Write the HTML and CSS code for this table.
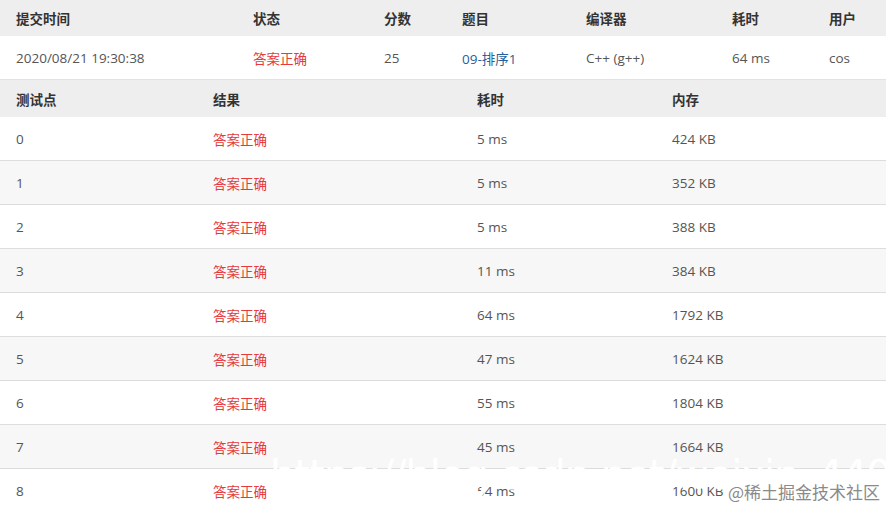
FILE: index.html
```html
<!DOCTYPE html>
<html lang="zh-CN">
<head>
<meta charset="utf-8">
<link rel="stylesheet" href="styles.css">
</head>
<body>
<div class="page">
  <table class="tbl summary">
    <colgroup>
      <col class="c1"><col class="c2"><col class="c3"><col class="c4"><col class="c5"><col class="c6"><col class="c7">
    </colgroup>
    <thead>
      <tr><th>提交时间</th><th>状态</th><th>分数</th><th>题目</th><th>编译器</th><th>耗时</th><th>用户</th></tr>
    </thead>
    <tbody>
      <tr><td>2020/08/21 19:30:38</td><td class="ok">答案正确</td><td>25</td><td class="link">09-排序1</td><td>C++ (g++)</td><td>64 ms</td><td>cos</td></tr>
    </tbody>
  </table>
  <table class="tbl cases">
    <colgroup>
      <col class="d1"><col class="d2"><col class="d3"><col class="d4">
    </colgroup>
    <thead>
      <tr><th>测试点</th><th>结果</th><th>耗时</th><th>内存</th></tr>
    </thead>
    <tbody>
      <tr><td>0</td><td class="ok">答案正确</td><td>5 ms</td><td>424 KB</td></tr>
      <tr><td>1</td><td class="ok">答案正确</td><td>5 ms</td><td>352 KB</td></tr>
      <tr><td>2</td><td class="ok">答案正确</td><td>5 ms</td><td>388 KB</td></tr>
      <tr><td>3</td><td class="ok">答案正确</td><td>11 ms</td><td>384 KB</td></tr>
      <tr><td>4</td><td class="ok">答案正确</td><td>64 ms</td><td>1792 KB</td></tr>
      <tr><td>5</td><td class="ok">答案正确</td><td>47 ms</td><td>1624 KB</td></tr>
      <tr><td>6</td><td class="ok">答案正确</td><td>55 ms</td><td>1804 KB</td></tr>
      <tr><td>7</td><td class="ok">答案正确</td><td>45 ms</td><td>1664 KB</td></tr>
      <tr><td>8</td><td class="ok">答案正确</td><td>54 ms</td><td>1600 KB</td></tr>
    </tbody>
  </table>
  <div class="ghost">https://blog.csdn.net/weixin_44062592</div>
  <div class="mark">@稀土掘金技术社区</div>
</div>
</body>
</html>
```
FILE: styles.css
```css
html, body {
  margin: 0;
  padding: 0;
  background: #fff;
}
body {
  font-family: "Open Sans", "Noto Sans CJK SC", sans-serif;
  font-size: 13.5px;
  color: #555;
}
.page {
  position: relative;
  width: 886px;
  height: 509px;
  overflow: hidden;
}
.tbl {
  width: 886px;
  border-collapse: collapse;
  table-layout: fixed;
}
.tbl th {
  background: #eeeeee;
  color: #333;
  font-weight: bold;
  text-align: left;
  padding: 0 0 0 16px;
  white-space: nowrap;
}
.tbl td {
  padding: 0 0 0 16px;
  white-space: nowrap;
  text-align: left;
}
.summary th { height: 36px; }
.summary td { height: 43px; border-bottom: 1px solid #e2e2e2; }
.c1 { width: 237px; }
.c2 { width: 131px; }
.c3 { width: 78px; }
.c4 { width: 124px; }
.c5 { width: 146px; }
.c6 { width: 97px; }
.c7 { width: 73px; }
.cases th { height: 37px; }
.cases td { height: 43px; border-bottom: 1px solid #dddddd; }
.cases tbody tr:nth-child(even) td { background: #f7f7f7; }
.d1 { width: 197px; }
.d2 { width: 264px; }
.d3 { width: 195px; }
.d4 { width: 230px; }
.ok { color: #e6393b; }
.link { color: #2a5d9c; }
.ghost {
  position: absolute;
  left: 270px;
  top: 452px;
  font-family: "DejaVu Sans", sans-serif;
  font-size: 40px;
  line-height: 46px;
  letter-spacing: -1px;
  color: #ffffff;
  white-space: nowrap;
}
.mark {
  position: absolute;
  right: 6px;
  top: 479px;
  font-family: "Noto Sans CJK SC", sans-serif;
  font-size: 17px;
  color: #8a8a8a;
  white-space: nowrap;
}
```
